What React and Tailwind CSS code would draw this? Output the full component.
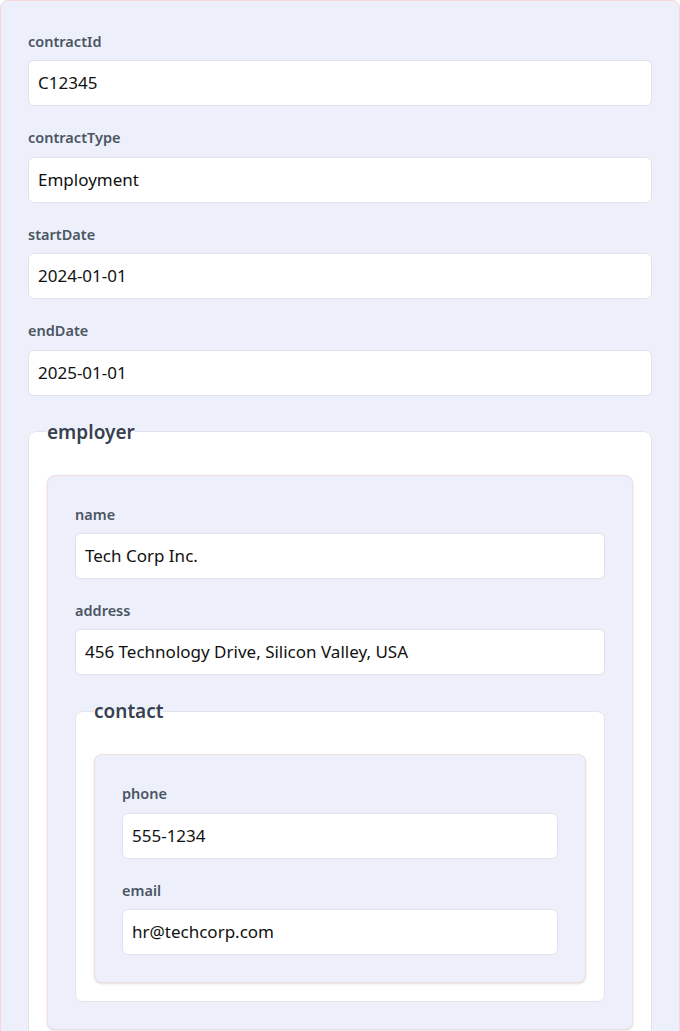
const data = {
  contractId: "C12345",
  contractType: "Employment",
  startDate: "2024-01-01",
  endDate: "2025-01-01",
  employer: {
    name: "Tech Corp Inc.",
    address: "456 Technology Drive, Silicon Valley, USA",
    contact: {
      phone: "555-1234",
      email: "hr@techcorp.com",
    },
  },
};

function Field({ name, value }) {
  return (
    <div>
      <label className="block text-[14.5px] leading-[22.4px] font-semibold text-[#4b5563] mb-2">
        {name}
      </label>
      <input
        readOnly
        value={value}
        className="block w-full rounded-md border border-[#dfe2ec] bg-white px-[9px] py-[10px] text-[17px] leading-6 text-[#111] outline-none"
      />
    </div>
  );
}

function Group({ obj }) {
  return (
    <div className="space-y-5">
      {Object.entries(obj).map(([key, value]) =>
        typeof value === "object" ? (
          <fieldset
            key={key}
            className="rounded-lg border border-[#e0e3ec] bg-white px-[18px] pt-[27px] pb-[18px]"
          >
            <legend className="text-[19px] leading-8 font-semibold text-[#374151]">
              {key}
            </legend>
            <div className="rounded-lg border border-[#f3dde0] bg-[#edf0fb] p-[27px] shadow-sm">
              <Group obj={value} />
            </div>
          </fieldset>
        ) : (
          <Field key={key} name={key} value={value} />
        )
      )}
    </div>
  );
}

export default function App() {
  return (
    <div
      className="min-h-screen bg-white"
      style={{ fontFamily: '"Noto Sans", "Open Sans", sans-serif' }}
    >
      <div className="rounded-t-lg border border-[#f5d6d9] bg-[#edf0fb] px-[27px] pt-[29px] pb-8">
        <Group obj={data} />
      </div>
    </div>
  );
}
